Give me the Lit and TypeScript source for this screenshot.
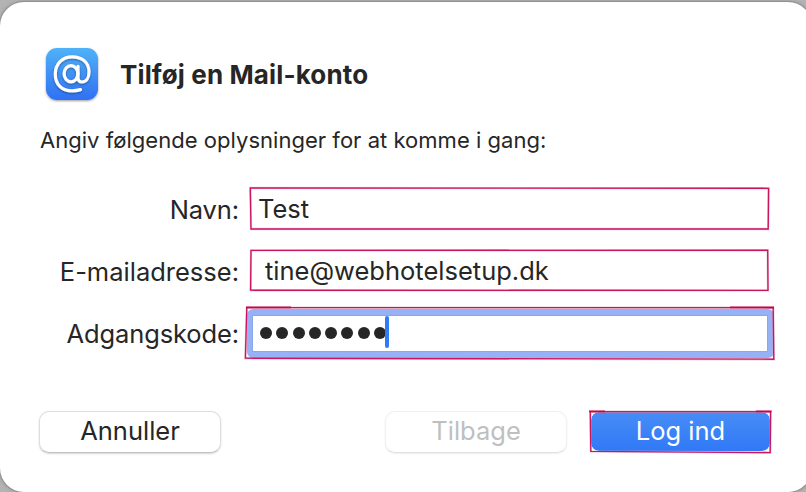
import { LitElement, html, svg, css } from "lit";
import { customElement, property } from "lit/decorators.js";

/** A hand-drawn marker frame around a control. */
@customElement("marker-frame")
class MarkerFrame extends LitElement {
  @property() points = "";
  @property() accents = "";

  static styles = css`
    :host { position: absolute; inset: 0; pointer-events: none; }
    svg { position: absolute; left: 0; top: 0; overflow: visible; width: 1px; height: 1px; }
    .halo { fill: none; stroke: #d9a3bc; stroke-width: 2.4; opacity: .55; }
    .line { fill: none; stroke: #cb1560; stroke-width: 1.35; }
    .accent { fill: none; stroke: #c1084f; stroke-width: 1.7; }
  `;

  render() {
    return html`<svg>
      ${svg`<polygon class="halo" points=${this.points}></polygon>
      <polygon class="line" points=${this.points}></polygon>
      <path class="accent" d=${this.accents}></path>`}
    </svg>`;
  }
}

@customElement("app-root")
class AppRoot extends LitElement {
  static styles = css`
    :host {
      display: block;
      width: 806px;
      height: 492px;
      overflow: hidden;
      background: #b3b3b3;
      font-family: Inter, "Liberation Sans", sans-serif;
      color: #262626;
    }
    .dialog {
      box-sizing: border-box;
      width: 812px;
      height: 490px;
      margin-top: 2px;
      padding: 46px 0 0 39px;
      border-radius: 24px;
      background: #fff;
      box-shadow: 0 0 0 1px #909090, 0 0 4px rgba(0, 0, 0, .25);
    }
    .wrap { display: flow-root; }
    header { display: flex; align-items: center; height: 52px; padding-left: 7px; gap: 22px; }
    .icon { display: block; width: 52px; height: 52px; overflow: visible; flex: none; }
    h1 { margin: 2px 0 0; font-size: 26px; line-height: 32px; font-weight: 700; letter-spacing: .13px; white-space: nowrap; }
    .intro { margin: 26px 0 0 1px; font-size: 22px; line-height: 28px; letter-spacing: .03px; white-space: nowrap; }
    .form {
      display: grid;
      grid-template-columns: 200px 520px;
      column-gap: 11px;
      row-gap: 20px;
      margin-top: 33px;
      font-size: 25.5px;
      align-items: center;
    }
    .label { text-align: right; white-space: nowrap; line-height: 42px; height: 42px; padding-top: 2px; box-sizing: border-box; }
    .label.tight { letter-spacing: -.12px; }
    .field {
      position: relative;
      box-sizing: border-box;
      height: 42px;
      line-height: 42px;
      padding: 2px 0 0 8px;
      white-space: nowrap;
      display: flex;
      align-items: center;
    }
    .field.mail { padding-left: 15px; }
    .field.focus::before {
      content: "";
      position: absolute;
      left: -3px;
      top: -2px;
      width: 516px;
      height: 37px;
      border: 6px solid #97b1f6;
      border-left-width: 5px;
      border-radius: 6px;
      box-shadow: inset 0 0 0 1px #8ba6ea;
    }
    .dots { display: flex; gap: 4.25px; margin: 0 0 0 2px; padding-bottom: 1px; }
    .dot { width: 12px; height: 12px; border-radius: 50%; background: #262626; }
    .caret { width: 4px; height: 32px; border-radius: 2px; background: #2f7bf8; margin: 0 0 2px -1px; z-index: 1; }
    .actions { display: flex; margin-top: 58px; font-size: 25.5px; }
    .button {
      position: relative;
      box-sizing: border-box;
      width: 182px;
      height: 42px;
      line-height: 38px;
      border-radius: 10px;
      text-align: center;
      background: #fff;
      white-space: nowrap;
      border: 1px solid #dedede;
      border-bottom-color: #c2c2c2;
      box-shadow: 0 1px 2px rgba(0, 0, 0, .16);
    }
    .button.back {
      margin-left: 164px;
      color: #bfbfbf;
      border-color: #f0f0f0;
      border-bottom-color: #e0e0e0;
      box-shadow: 0 1px 2px rgba(0, 0, 0, .07);
    }
    .button.primary {
      margin-left: 23px;
      width: 181px;
      height: 41px;
      color: #fff;
      border: 1px solid #fff;
      border-radius: 9px;
      background: linear-gradient(#478df7, #3178f6) padding-box;
      box-shadow: none;
    }
  `;

  render() {
    return html`<div class="wrap"><div class="dialog">
      <header>
        <svg class="icon" viewBox="0 0 52 52">
          <defs>
            <linearGradient id="sky" x1="0" y1="0" x2="0" y2="1">
              <stop offset="0" stop-color="#50b2f8"></stop>
              <stop offset="1" stop-color="#3070f3"></stop>
            </linearGradient>
            <filter id="drop" x="-20%" y="-20%" width="140%" height="150%">
              <feDropShadow dx="0" dy="1" stdDeviation="1" flood-color="#000" flood-opacity=".4"></feDropShadow>
            </filter>
          </defs>
          <rect width="52" height="52" rx="11" fill="url(#sky)" filter="url(#drop)"></rect>
          <g fill="none" stroke="#fff" stroke-width="3.2" stroke-linecap="round" filter="url(#drop)">
            <path d="M34.5 41.6C31.5 42.5 29 42.8 26 42.8C15.8 42.8 9.3 36.3 9.3 26.2C9.3 15.8 16.2 8.8 26.4 8.8C36.3 8.8 43 14.8 43 23.8C43 30 40.2 34 36.2 34C33.4 34 32 32.4 32 29.8V18.3"></path>
            <ellipse cx="25" cy="25.8" rx="6.9" ry="8.1"></ellipse>
          </g>
        </svg>
        <h1>Tilføj en Mail-konto</h1>
      </header>
      <p class="intro">Angiv følgende oplysninger for at komme i gang:</p>
      <div class="form">
        <div class="label tight">Navn:</div>
        <div class="field">
          <span>Test</span>
          <marker-frame points="0.3,1 518.6,1.3 518.2,42 1,42"></marker-frame>
        </div>
        <div class="label">E-mailadresse:</div>
        <div class="field mail">
          <span>tine@webhotelsetup.dk</span>
          <marker-frame points="1,1.4 517.7,1.2 518,41.4 0.6,41.2"></marker-frame>
        </div>
        <div class="label tight">Adgangskode:</div>
        <div class="field focus">
          <div class="dots">${Array.from({ length: 8 }, () => html`<i class="dot"></i>`)}</div>
          <i class="caret"></i>
          <marker-frame points="-3.2,-3.4 523.2,-3.3 523.8,48.2 -4.6,47.2" accents="M-4 -3.6H41M480 -3.6H524"></marker-frame>
        </div>
      </div>
      <div class="actions">
        <div class="button">Annuller</div>
        <div class="button back">Tilbage</div>
        <div class="button primary">Log ind
          <marker-frame points="-0.7,-0.4 179.6,-0.3 179.2,40.6 -0.2,39.4" accents="M-2 -.6H14M165 -.6H180.5"></marker-frame>
        </div>
      </div>
    </div></div>`;
  }
}
